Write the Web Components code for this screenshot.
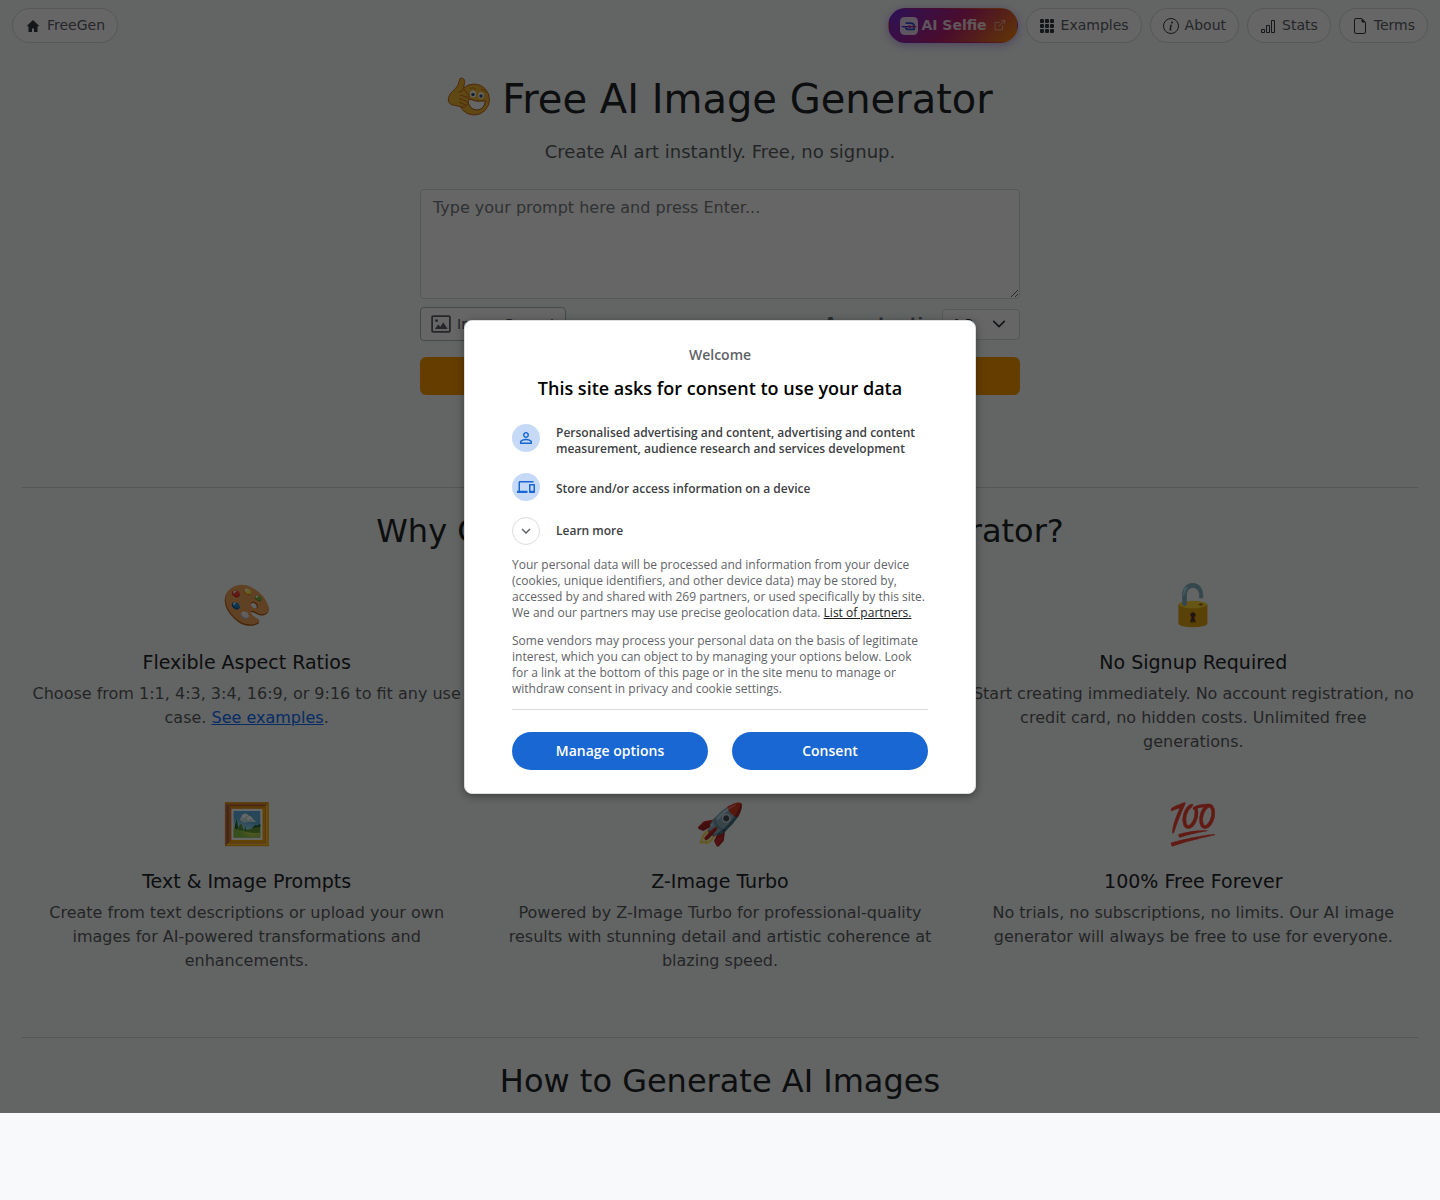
<!DOCTYPE html>
<html lang="en">
<head>
<meta charset="utf-8">
<meta name="viewport" content="width=device-width, initial-scale=1">
<title>Free AI Image Generator</title>
<style>
  body {
    margin: 0;
    background: #f8f9fb;
    color: #212529;
    font: 16px/24px "DejaVu Sans", sans-serif;
  }
</style>
</head>
<body>
<free-gen-app></free-gen-app>

<script>
const icons = {
  home: '<path fill="currentColor" d="M8 2 1.500 8.200H3.500V14H7v-3.500h2V14h3.500V8.200h2z"/>',
  grid: '<path fill="currentColor" d="M1 2a1 1 0 0 1 1-1h2a1 1 0 0 1 1 1v2a1 1 0 0 1-1 1H2a1 1 0 0 1-1-1zm5 0a1 1 0 0 1 1-1h2a1 1 0 0 1 1 1v2a1 1 0 0 1-1 1H7a1 1 0 0 1-1-1zm5 0a1 1 0 0 1 1-1h2a1 1 0 0 1 1 1v2a1 1 0 0 1-1 1h-2a1 1 0 0 1-1-1zM1 7a1 1 0 0 1 1-1h2a1 1 0 0 1 1 1v2a1 1 0 0 1-1 1H2a1 1 0 0 1-1-1zm5 0a1 1 0 0 1 1-1h2a1 1 0 0 1 1 1v2a1 1 0 0 1-1 1H7a1 1 0 0 1-1-1zm5 0a1 1 0 0 1 1-1h2a1 1 0 0 1 1 1v2a1 1 0 0 1-1 1h-2a1 1 0 0 1-1-1zM1 12a1 1 0 0 1 1-1h2a1 1 0 0 1 1 1v2a1 1 0 0 1-1 1H2a1 1 0 0 1-1-1zm5 0a1 1 0 0 1 1-1h2a1 1 0 0 1 1 1v2a1 1 0 0 1-1 1H7a1 1 0 0 1-1-1zm5 0a1 1 0 0 1 1-1h2a1 1 0 0 1 1 1v2a1 1 0 0 1-1 1h-2a1 1 0 0 1-1-1z"/>',
  info: '<circle cx="8" cy="8" r="7.5" fill="none" stroke="currentColor"/><path fill="currentColor" d="m8.93 6.588-2.29.287-.082.38.45.083c.294.07.352.176.288.469l-.738 3.468c-.194.897.105 1.319.808 1.319.545 0 1.178-.252 1.465-.598l.088-.416c-.2.176-.492.246-.686.246-.275 0-.375-.193-.304-.533z"/><circle cx="9" cy="4.5" r="1" fill="currentColor"/>',
  stats: '<path fill="none" stroke="currentColor" d="M1.500 11.500h3v3h-3zM6.500 7.500h3v7h-3zM11.500 2.500h3v12h-3z"/>',
  file: '<path fill="none" stroke="currentColor" d="M9.500.5H4A1.500 1.500 0 0 0 2.500 2v12A1.500 1.500 0 0 0 4 15.500h8a1.500 1.500 0 0 0 1.500-1.500V4.500z"/><path fill="currentColor" d="M9.500 0v3A1.500 1.500 0 0 0 11 4.500h3z"/>',
  external: '<path fill="none" stroke="currentColor" d="M8.500 3.500H1.500v11h11V8M10 .500h5.500V6M15.500.500 6.500 9.500"/>',
  selfie: '<defs><linearGradient id="g"><stop stop-color="#4020e0"/><stop offset="1" stop-color="#c02090"/></linearGradient></defs><rect width="16" height="16" rx="4" fill="#ffffffd0"/><path d="M5 5.500h4.500q3 0 3 2.500V11H7.500Q5 11 5 9" fill="none" stroke="#304bcf" stroke-width="1.500"/><rect x="1.500" y="8" width="13" height="1.200" fill="url(#g)"/><circle cx="8.500" cy="8.500" r="1.200" fill="#a020b0"/>',
  image: '<rect x="1" y="1" width="16" height="14" rx="1" fill="none" stroke="currentColor" stroke-width="1.600"/><circle cx="5" cy="5" r="1.300" fill="currentColor"/><path fill="currentColor" d="m3.500 12.500 3-4 2 2 2.500-4 4 6z"/>',
  person: '<path fill="currentColor" d="M12 5.900c1.160 0 2.100.940 2.100 2.100s-.940 2.100-2.100 2.100S9.900 9.160 9.900 8s.940-2.100 2.100-2.100m0 9c2.970 0 6.100 1.460 6.100 2.100v1.100H5.900V17c0-.640 3.130-2.100 6.100-2.100M12 4C9.790 4 8 5.790 8 8s1.790 4 4 4 4-1.790 4-4-1.790-4-4-4m0 9c-2.670 0-8 1.340-8 4v3h16v-3c0-2.660-5.330-4-8-4"/>',
  devices: '<path fill="currentColor" d="M4 6h18V4H4c-1.100 0-2 .900-2 2v11H0v3h14v-3H4zm19 2h-6c-.550 0-1 .450-1 1v10c0 .550.450 1 1 1h6c.550 0 1-.450 1-1V9c0-.550-.450-1-1-1m-1 9h-4v-7h4z"/>',
  chevron: '<path fill="currentColor" d="M16.590 8.590 12 13.170 7.410 8.590 6 10l6 6 6-6z"/>'
};

function icon(name, size = 16, box = '0 0 16 16') {
  return `<svg width="${size}" height="${size}" viewBox="${box}" aria-hidden="true">${icons[name]}</svg>`;
}

class BaseElement extends HTMLElement {
  constructor() {
    super();
    this.attachShadow({ mode: 'open' });
  }

  connectedCallback() {
    this.shadowRoot.innerHTML = this.render();
  }
}

class NavPill extends BaseElement {
  render() {
    return `
      <style>
        :host { display: block; }
        a {
          display: flex;
          align-items: center;
          gap: 6px;
          box-sizing: border-box;
          height: 35px;
          padding: 0 12px;
          border: 1px solid #d5d9dd;
          border-radius: 18px;
          background: #fff;
          color: #5a6067;
          font-size: 14px;
          line-height: 21px;
          text-decoration: none;
        }
        svg { color: #343a40; }
        :host([promo]) a {
          gap: 3px;
          padding: 0 12px 0 11px;
          border-color: transparent;
          background: linear-gradient(135deg, #6f2cda 0%, #b81f72 50%, #f58a07 100%);
          color: #ffffffd0;
          font-weight: bold;
          box-shadow: 0 2px 8px rgba(111, 44, 218, .4);
        }
        :host([promo]) svg { color: #ffffffb0; }
        .external { margin-left: 4px; }
      </style>
      <a href="#">${icon(this.getAttribute('icon'), this.hasAttribute('promo') ? 18 : 16)}<slot></slot>
        ${this.hasAttribute('promo') ? `<svg class="external" width="11" height="11" viewBox="0 0 16 16">${icons.external}</svg>` : ''}
      </a>`;
  }
}

class SiteNav extends BaseElement {
  render() {
    return `
      <style>
        :host { display: block; }
        nav {
          display: flex;
          justify-content: space-between;
          padding: 8px 12px;
        }
        div { display: flex; gap: 8px; }
      </style>
      <nav>
        <nav-pill icon="home">FreeGen</nav-pill>
        <div>
          <nav-pill icon="selfie" promo>AI Selfie</nav-pill>
          <nav-pill icon="grid">Examples</nav-pill>
          <nav-pill icon="info">About</nav-pill>
          <nav-pill icon="stats">Stats</nav-pill>
          <nav-pill icon="file">Terms</nav-pill>
        </div>
      </nav>`;
  }
}

class SiteLogo extends BaseElement {
  render() {
    return `
      <style>
        :host { display: block; }
        svg { display: block; }
      </style>
      <svg width="44" height="44" viewBox="0 0 44 44" aria-hidden="true">
        <circle cx="27" cy="22.500" r="15.500" fill="#eeb332" stroke="#c56a20"/>
        <ellipse cx="26" cy="17" rx="3" ry="3.500" fill="#fff"/>
        <ellipse cx="34" cy="18.500" rx="2.800" ry="3.200" fill="#fff"/>
        <circle cx="26" cy="17.500" r="1.800" fill="#305b78"/>
        <circle cx="34" cy="19" r="1.800" fill="#305b78"/>
        <path d="M23 11.500q4-2 6 1M34 12.500q4-.500 5 3" fill="none" stroke="#c77a20"/>
        <path d="M20.500 21.500q9 4 18 2.500-1.500 9-9 9-8-.500-9-11.500z" fill="#fff" stroke="#a6551e"/>
        <path d="M13 1.500c3-1 5 .5 4.500 4l-1 6 3.500 4.500c2 1 2.500 3 1.500 4.500 1 1.500.500 3-.5 4 .5 2-.5 3.500-2 3.500-.5 2-2 2.500-4 2L4 27.500Q0 25 1.500 20.500C3 15 8 13.500 11 8z" fill="#eeb332" stroke="#c56a20"/>
        <path d="M11.500 15q3.500.500 5-3M13 18l8 2.500M12 21.500l8.500 3M12 25l6.500 3" fill="none" stroke="#c56a20"/>
      </svg>`;
  }
}

class PromptHero extends BaseElement {
  render() {
    return `
      <style>
        :host {
          display: block;
          padding: 24px 12px 92px;
          text-align: center;
        }
        h1 {
          display: flex;
          align-items: center;
          justify-content: center;
          gap: 11px;
          margin: 0 0 16px;
          font-size: 40px;
          font-weight: 400;
          line-height: 48px;
        }
        .lead {
          margin: 0 0 24px;
          color: rgba(33, 37, 41, .75);
          font-size: 18px;
          line-height: 26px;
        }
        form {
          max-width: 600px;
          margin: 0 auto;
        }
        textarea, select, button {
          box-sizing: border-box;
          border: 1px solid #d5d9dd;
          border-radius: 4px;
          background: #fff;
          color: #212529;
          font: inherit;
        }
        textarea {
          display: block;
          width: 100%;
          height: 110px;
          padding: 6px 12px;
          resize: vertical;
        }
        textarea::placeholder { color: #777c80; opacity: 1; }
        .options {
          display: flex;
          align-items: center;
          gap: 8px;
          margin: 8px 0 16px;
        }
        .upload {
          display: flex;
          align-items: center;
          gap: 6px;
          height: 34px;
          margin-right: auto;
          padding: 0 9px 0 10px;
          border-color: #adb5bd;
          color: #5a6067;
          font-size: 14px;
        }
        label { color: #6c757d; font-weight: bold; }
        .select { display: grid; align-items: center; }
        .select > * { grid-area: 1 / 1; }
        select {
          appearance: none;
          width: 78px;
          height: 31px;
          padding: 0 8px;
          font-size: 14px;
          line-height: 21px;
        }
        .select svg { justify-self: end; margin-right: 14px; pointer-events: none; }
        .submit {
          display: block;
          width: 100%;
          height: 38px;
          border: 0;
          border-radius: 6px;
          background: #ff9900;
        }
      </style>
      <h1><site-logo></site-logo>Free AI Image Generator</h1>
      <p class="lead">Create AI art instantly. Free, no signup.</p>
      <form>
        <textarea aria-label="Prompt" placeholder="Type your prompt here and press Enter..."></textarea>
        <div class="options">
          <button class="upload" type="button">${icon('image', 20, '0 0 18 16')}Image Prompt</button>
          <label for="ratio">Aspect ratio</label>
          <div class="select">
            <select id="ratio">
              <option>1:1</option>
              <option selected>4:3</option>
              <option>3:4</option>
              <option>16:9</option>
              <option>9:16</option>
            </select>
            <svg width="14" height="14" viewBox="0 0 16 16"><path d="m2 5 6 6 6-6" fill="none" stroke="#343a40" stroke-width="2" stroke-linecap="round" stroke-linejoin="round"/></svg>
          </div>
        </div>
        <button class="submit" type="button">Generate</button>
      </form>`;
  }
}

class PageSection extends BaseElement {
  render() {
    return `
      <style>
        :host { display: block; padding: 0 22px; }
        section { border-top: 1px solid #d0d4d7; padding-top: 24px; }
        h2 {
          margin: 0;
          font-size: 32px;
          font-weight: 400;
          line-height: 38px;
          text-align: center;
        }
      </style>
      <section>
        <h2>${this.getAttribute('heading')}</h2>
        <slot></slot>
      </section>`;
  }
}

class FeatureGrid extends BaseElement {
  render() {
    return `
      <style>
        :host {
          display: grid;
          grid-template-columns: repeat(3, 1fr);
          gap: 40px 24px;
          padding: 25px 0 64px;
        }
      </style>
      <slot></slot>`;
  }
}

class FeatureCard extends BaseElement {
  render() {
    return `
      <style>
        :host { display: block; text-align: center; }
        .emoji {
          height: 60px;
          margin-bottom: 16px;
          font-size: 40px;
          line-height: 60px;
        }
        h3 {
          margin: 0 0 8px;
          font-size: 19px;
          font-weight: 400;
          line-height: 23px;
        }
        p { margin: 0; color: rgba(33, 37, 41, .75); }
      </style>
      <div class="emoji">${this.getAttribute('emoji')}</div>
      <h3>${this.getAttribute('heading')}</h3>
      <p><slot></slot></p>`;
  }
}

class ConsentButton extends BaseElement {
  render() {
    return `
      <style>
        :host { display: block; flex: 1; }
        button {
          width: 100%;
          height: 38px;
          border: 0;
          border-radius: 19px;
          background: #1967d2;
          color: #fff;
          font: inherit;
          font-size: 14px;
          font-weight: 600;
        }
      </style>
      <button type="button"><slot></slot></button>`;
  }
}

class ConsentItem extends BaseElement {
  render() {
    return `
      <style>
        :host {
          display: flex;
          align-items: flex-start;
          gap: 16px;
          color: #3c4043;
          font-size: 12px;
          font-weight: 600;
          line-height: 16px;
        }
        .badge {
          display: grid;
          flex: none;
          place-items: center;
          box-sizing: border-box;
          width: 28px;
          height: 28px;
          border-radius: 50%;
          background: #c6daf7;
          color: #1967d2;
        }
        .label { padding-top: 8px; }
        :host([multiline]) .label { padding-top: 1px; }
        :host([outline]) .label { padding-top: 6px; }
        :host([outline]) .badge {
          border: 1px solid #dadce0;
          background: #fff;
          color: #5f6368;
        }
      </style>
      <span class="badge">${icon(this.getAttribute('icon'), 18, '0 0 24 24')}</span>
      <span class="label"><slot></slot></span>`;
  }
}

class ConsentDialog extends BaseElement {
  render() {
    return `
      <style>
        :host {
          position: absolute;
          inset: 0;
          display: grid;
          place-items: center;
          background: rgba(0, 0, 0, .6);
          font-family: "Open Sans", sans-serif;
        }
        .dialog {
          box-sizing: border-box;
          width: 512px;
          max-width: 100%;
          padding: 24px 47px 23px;
          border: 1px solid #dadce0;
          border-radius: 8px;
          background: #fff;
          box-shadow: 0 2px 8px rgba(0, 0, 0, .4);
        }
        .welcome {
          margin: 0 0 12px;
          color: #5f6368;
          font-size: 14px;
          font-weight: 600;
          line-height: 20px;
          text-align: center;
        }
        h1 {
          margin: 0 0 25px;
          color: #000;
          font-size: 18px;
          font-weight: 550;
          line-height: 22px;
          text-align: center;
        }
        .items { display: grid; gap: 16px; margin-bottom: 12px; }
        .text {
          margin: 0 0 12px;
          color: #5f6368;
          font-size: 12px;
          line-height: 16px;
        }
        .text a { color: #202124; }
        .actions {
          display: flex;
          gap: 24px;
          padding-top: 22px;
          border-top: 1px solid #dadce0;
        }
      </style>
      <div class="dialog" role="dialog" aria-labelledby="title">
        <p class="welcome">Welcome</p>
        <h1 id="title">This site asks for consent to use your data</h1>
        <div class="items">
          <consent-item icon="person" multiline>Personalised advertising and content, advertising and content measurement, audience research and services development</consent-item>
          <consent-item icon="devices">Store and/or access information on a device</consent-item>
          <consent-item icon="chevron" outline>Learn more</consent-item>
        </div>
        <p class="text">Your personal data will be processed and information from your device (cookies, unique identifiers, and other device data) may be stored by, accessed by and shared with 269 partners, or used specifically by this site. We and our partners may use precise geolocation data. <a href="#">List of partners.</a></p>
        <p class="text">Some vendors may process your personal data on the basis of legitimate interest, which you can object to by managing your options below. Look for a link at the bottom of this page or in the site menu to manage or withdraw consent in privacy and cookie settings.</p>
        <div class="actions">
          <consent-button>Manage options</consent-button>
          <consent-button>Consent</consent-button>
        </div>
      </div>`;
  }
}

class FreeGenApp extends BaseElement {
  render() {
    return `
      <style>
        :host {
          position: relative;
          display: block;
          padding-bottom: 13px;
          background: #f7faf9;
        }
        a { color: #0d6efd; }
      </style>
      <site-nav></site-nav>
      <prompt-hero></prompt-hero>
      <page-section heading="Why Choose Our Free AI Image Generator?">
        <feature-grid>
          <feature-card emoji="🎨" heading="Flexible Aspect Ratios">Choose from 1:1, 4:3, 3:4, 16:9, or 9:16 to fit any use case. <a href="#">See examples</a>.</feature-card>
          <feature-card emoji="⚡" heading="Fast Generation">Create images in seconds.</feature-card>
          <feature-card emoji="🔓" heading="No Signup Required">Start creating immediately. No account registration, no credit card, no hidden costs. Unlimited free generations.</feature-card>
          <feature-card emoji="🖼️" heading="Text &amp; Image Prompts">Create from text descriptions or upload your own images for AI-powered transformations and enhancements.</feature-card>
          <feature-card emoji="🚀" heading="Z-Image Turbo">Powered by Z-Image Turbo for professional-quality results with stunning detail and artistic coherence at blazing speed.</feature-card>
          <feature-card emoji="💯" heading="100% Free Forever">No trials, no subscriptions, no limits. Our AI image generator will always be free to use for everyone.</feature-card>
        </feature-grid>
      </page-section>
      <page-section heading="How to Generate AI Images"></page-section>
      <consent-dialog></consent-dialog>`;
  }
}

customElements.define('nav-pill', NavPill);
customElements.define('site-nav', SiteNav);
customElements.define('site-logo', SiteLogo);
customElements.define('prompt-hero', PromptHero);
customElements.define('page-section', PageSection);
customElements.define('feature-grid', FeatureGrid);
customElements.define('feature-card', FeatureCard);
customElements.define('consent-button', ConsentButton);
customElements.define('consent-item', ConsentItem);
customElements.define('consent-dialog', ConsentDialog);
customElements.define('free-gen-app', FreeGenApp);
</script>
</body>
</html>
